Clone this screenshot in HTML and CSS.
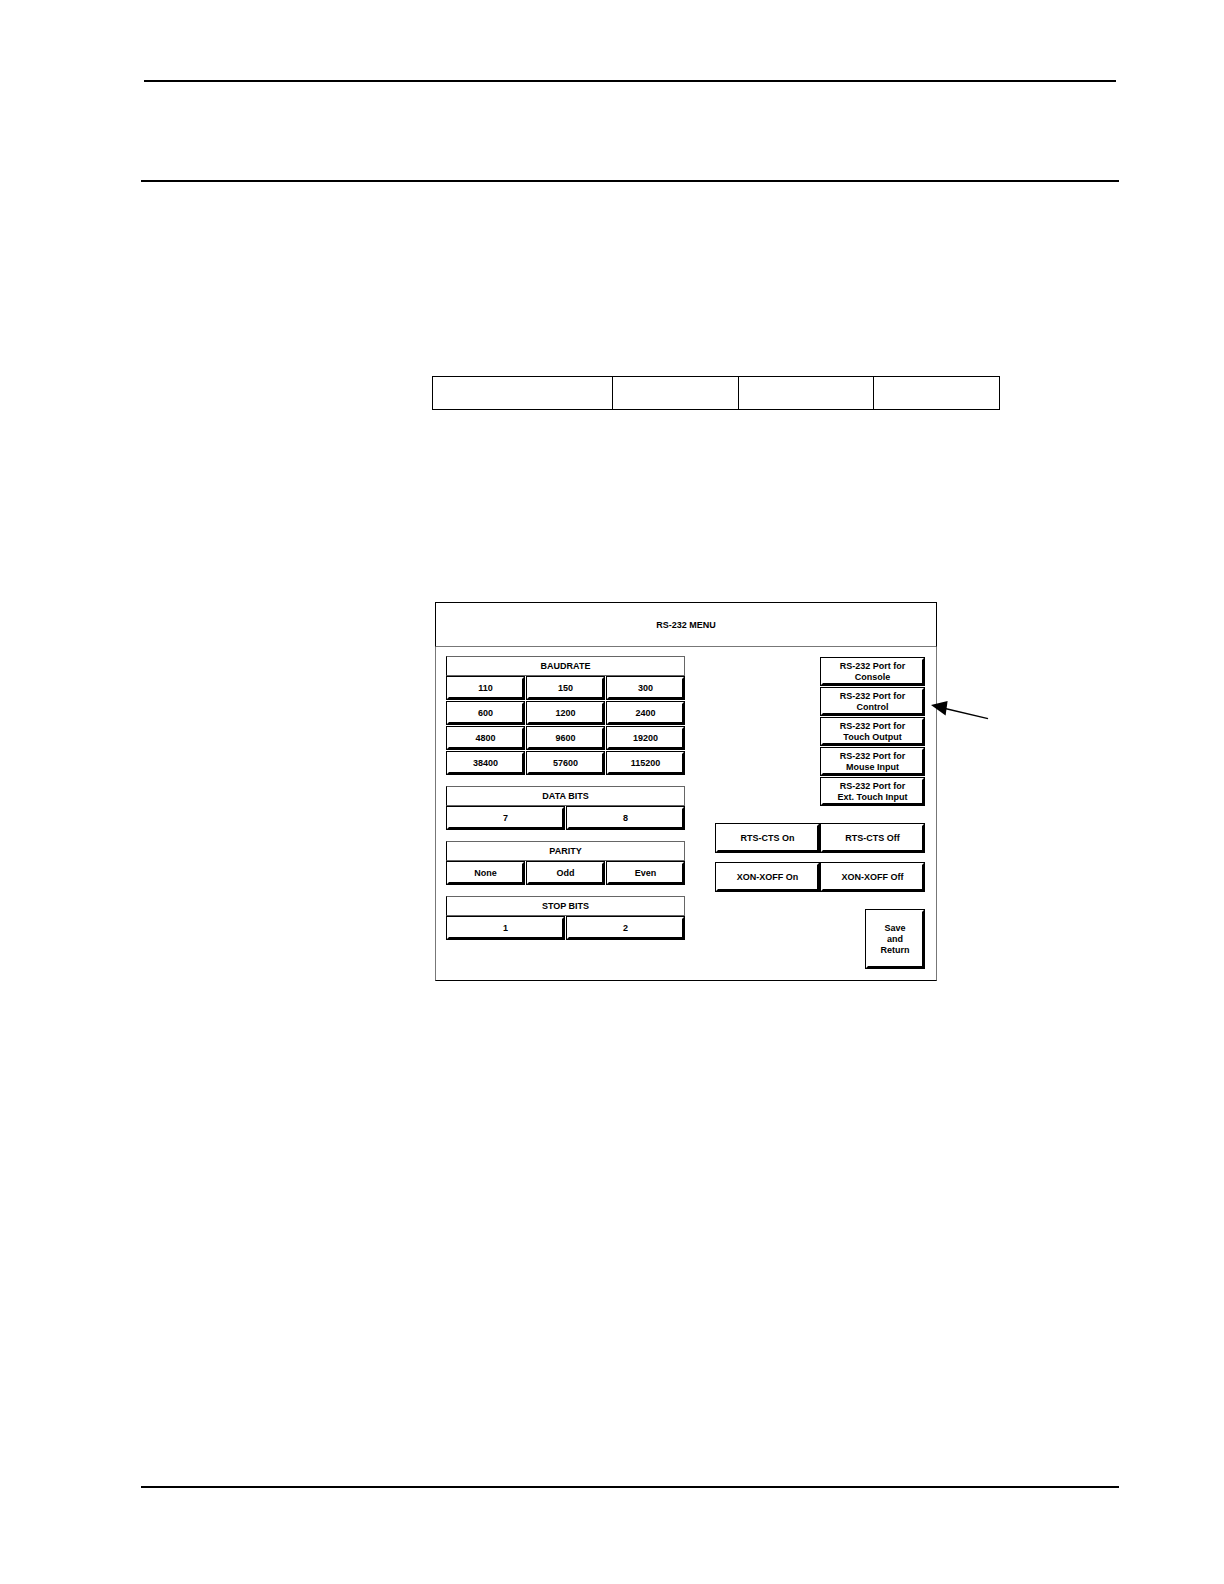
FILE: index.html
```html
<!DOCTYPE html>
<html lang="en">
<head>
  <meta charset="UTF-8">
  <meta name="viewport" content="width=device-width, initial-scale=1.0">
  <title>RS-232 Menu</title>
  <link rel="stylesheet" href="styles.css">
</head>
<body>
  <div class="page">
    <header class="page-header"></header>

    <main class="content">
      <table class="summary">
        <colgroup>
          <col class="col-wide">
          <col class="col-narrow">
          <col class="col-medium">
          <col class="col-narrow">
        </colgroup>
        <tr>
          <td></td>
          <td></td>
          <td></td>
          <td></td>
        </tr>
      </table>

      <div class="menu">
        <h1 class="menu-title">RS-232 MENU</h1>

        <div class="menu-body">
          <div class="settings">
            <section>
              <h2>BAUDRATE</h2>
              <div class="btns three">
                <button class="btn">110</button>
                <button class="btn">150</button>
                <button class="btn">300</button>
                <button class="btn">600</button>
                <button class="btn">1200</button>
                <button class="btn">2400</button>
                <button class="btn">4800</button>
                <button class="btn">9600</button>
                <button class="btn">19200</button>
                <button class="btn">38400</button>
                <button class="btn">57600</button>
                <button class="btn">115200</button>
              </div>
            </section>

            <section>
              <h2>DATA BITS</h2>
              <div class="btns two">
                <button class="btn">7</button>
                <button class="btn">8</button>
              </div>
            </section>

            <section>
              <h2>PARITY</h2>
              <div class="btns three">
                <button class="btn">None</button>
                <button class="btn">Odd</button>
                <button class="btn">Even</button>
              </div>
            </section>

            <section>
              <h2>STOP BITS</h2>
              <div class="btns two">
                <button class="btn">1</button>
                <button class="btn">2</button>
              </div>
            </section>
          </div>

          <div class="ports">
            <div class="port-list">
              <button class="btn">RS-232 Port for<br>Console</button>
              <button class="btn">RS-232 Port for<br>Control</button>
              <button class="btn">RS-232 Port for<br>Touch Output</button>
              <button class="btn">RS-232 Port for<br>Mouse Input</button>
              <button class="btn">RS-232 Port for<br>Ext. Touch Input</button>
            </div>

            <div class="flow-control">
              <button class="btn">RTS-CTS On</button>
              <button class="btn">RTS-CTS Off</button>
              <button class="btn">XON-XOFF On</button>
              <button class="btn">XON-XOFF Off</button>
            </div>

            <button class="btn save">Save<br>and<br>Return</button>
          </div>
        </div>

        <!-- pointer to the Control port button -->
        <svg class="arrow" width="60" height="20" viewBox="0 0 60 20" aria-hidden="true">
          <path d="M14 8.2L58 18.6" stroke="#000" stroke-width="1.4" fill="none" />
          <path d="M1 5L17.6 1L15.6 15.6Z" fill="#000" />
        </svg>
      </div>
    </main>

    <footer class="page-footer"></footer>
  </div>
</body>
</html>
```

FILE: styles.css
```css
* {
  box-sizing: border-box;
}
body {
  margin: 0;
  background-color: white;
  color: black;
  font-family: "Liberation Sans", Arial, sans-serif;
}
.page {
  display: flex;
  flex-direction: column;
  min-height: 100vh;
  padding: 80px 105px 96px 141px;
}
.page-header {
  height: 102px;
  border-bottom: 2px solid black;
}
.page-header::before {
  content: "";
  display: block;
  margin: 0 3px;
  border-top: 2px solid black;
}
.page-footer {
  border-top: 2px solid black;
}
.content {
  flex: 1;
  padding: 194px 0 0 291px;
}
.summary {
  width: 100%;
  max-width: 568px;
  height: 34px;
  margin-bottom: 192px;
  border-collapse: collapse;
  table-layout: fixed;
}
.summary td {
  padding: 0;
  border: 1px solid black;
}
.col-wide {
  width: 180px;
}
.col-medium {
  width: 135px;
}
.col-narrow {
  width: 126px;
}
.menu {
  position: relative;
  max-width: 502px;
  margin-left: 3px;
}
.menu-title {
  display: flex;
  align-items: center;
  justify-content: center;
  height: 45px;
  margin: 0;
  border: 1px solid black;
  border-bottom-color: #777;
  font-size: 9px;
}
.menu-body {
  display: flex;
  justify-content: space-between;
  padding: 9px 11px 11px 10px;
  border: 1px solid #777;
  border-top: none;
  border-bottom-color: black;
}
.settings {
  display: flex;
  flex-direction: column;
  gap: 11px;
  width: 239px;
}
h2 {
  height: 20px;
  margin: 0;
  border: 1px solid #666;
  border-left-color: black;
  font-size: 9px;
  line-height: 18px;
  text-align: center;
}
.btns {
  display: grid;
  grid-auto-rows: 24px;
  gap: 1px;
}
.two {
  grid-template-columns: repeat(2, 1fr);
}
.three {
  grid-template-columns: repeat(3, 1fr);
}
.btn {
  padding: 0;
  border: 3px solid;
  border-color: white black black white;
  outline: 1px solid black;
  outline-offset: -1px;
  background-color: white;
  color: black;
  font-family: inherit;
  font-size: 9px;
  font-weight: bold;
  line-height: 11px;
  cursor: pointer;
}
.ports {
  display: flex;
  flex-direction: column;
  align-items: flex-end;
  gap: 17px;
  padding-top: 1px;
}
.port-list {
  display: grid;
  grid-auto-rows: 29px;
  gap: 1px;
  width: 105px;
}
.flow-control {
  display: grid;
  grid-template-columns: 1fr 1fr;
  grid-auto-rows: 30px;
  gap: 9px 0;
  width: 210px;
}
.save {
  width: 60px;
  height: 60px;
}
.arrow {
  position: absolute;
  top: 98px;
  right: -53px;
}
```
